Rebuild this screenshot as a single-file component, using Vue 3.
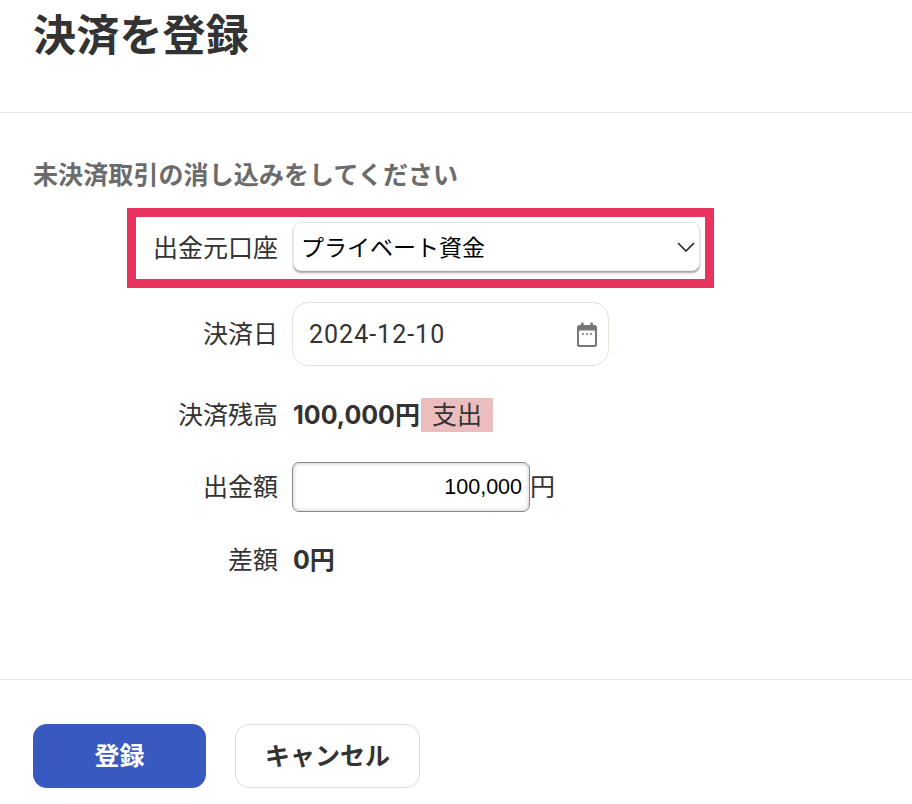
<script setup>
import { ref } from 'vue'

const account = ref('private')
const accounts = [{ id: 'private', name: 'プライベート資金' }]
const payDate = ref('2024-12-10')
const amount = ref('100,000')
</script>

<template>
  <div class="page">
    <header class="page-header">
      <h1>決済を登録</h1>
    </header>

    <main class="page-body">
      <p class="lead">未決済取引の消し込みをしてください</p>

      <div class="form">
        <div class="row row-highlight">
          <label class="row-label">出金元口座</label>
          <div class="select-wrap">
            <select v-model="account" class="select">
              <option v-for="a in accounts" :key="a.id" :value="a.id">{{ a.name }}</option>
            </select>
            <svg class="chevron" width="18" height="10" viewBox="0 0 18 10" fill="none">
              <path d="M1 1l8 8 8-8" stroke="#222" stroke-width="1.6" />
            </svg>
          </div>
        </div>

        <div class="row row-date">
          <label class="row-label">決済日</label>
          <div class="date-wrap">
            <input v-model="payDate" type="text" class="date-input">
            <svg class="calendar" width="22" height="26" viewBox="0 0 22 26">
              <rect x="5" y="0.5" width="2.6" height="5" rx="1" fill="#777" />
              <rect x="14.4" y="0.5" width="2.6" height="5" rx="1" fill="#777" />
              <path d="M3.5 3h15A2.5 2.5 0 0 1 21 5.500v17a2.500 2.500 0 0 1-2.500 2.500h-15A2.500 2.500 0 0 1 1 22.500v-17A2.500 2.500 0 0 1 3.500 3z" fill="#777" />
              <rect x="3" y="8.500" width="16" height="14.500" rx="0.800" fill="#fff" />
              <circle cx="7" cy="12" r="1" fill="#777" />
              <circle cx="11" cy="12" r="1" fill="#777" />
              <circle cx="15" cy="12" r="1" fill="#777" />
            </svg>
          </div>
        </div>

        <div class="row row-balance">
          <label class="row-label">決済残高</label>
          <strong class="value">100,000円</strong>
          <span class="badge">支出</span>
        </div>

        <div class="row row-amount">
          <label class="row-label">出金額</label>
          <input v-model="amount" type="text" class="amount-input">
          <span class="unit">円</span>
        </div>

        <div class="row row-diff">
          <label class="row-label">差額</label>
          <strong class="value">0円</strong>
        </div>
      </div>
    </main>

    <footer class="page-footer">
      <button type="button" class="btn btn-primary">登録</button>
      <button type="button" class="btn btn-cancel">キャンセル</button>
    </footer>
  </div>
</template>

<style scoped>
.page {
  width: 912px;
  height: 804px;
  overflow: hidden;
  background: #fff;
  color: #333;
  font-family: "Noto Sans CJK JP", "Noto Sans", sans-serif;
}
.page-header {
  height: 112px;
  padding-left: 33px;
  border-bottom: 1px solid #e6e6e6;
}
h1 {
  margin: 0;
  font-size: 43px;
  line-height: 64px;
  font-weight: 700;
  letter-spacing: 0.2px;
  color: #333;
}
.page-body {
  height: 567px;
  box-sizing: border-box;
  padding-top: 42px;
  border-bottom: 1px solid #e6e6e6;
}
.lead {
  margin: 0 0 17px 33px;
  font-size: 25px;
  line-height: 36px;
  font-weight: 700;
  letter-spacing: 0.1px;
  color: #6b6b6b;
}
.form {
  display: flex;
  flex-direction: column;
}
.row {
  display: flex;
  align-items: center;
  padding-left: 136px;
}
.row-label {
  width: 142px;
  margin-right: 14px;
  padding-bottom: 4px;
  text-align: right;
  font-size: 25px;
  line-height: 36px;
  color: #333;
  flex-shrink: 0;
}
.row-highlight {
  width: 587px;
  height: 80px;
  box-sizing: border-box;
  margin-left: 127px;
  padding-left: 0;
  border: 9px solid #e9345f;
}
.select-wrap {
  position: relative;
  width: 407px;
  height: 49px;
  margin-left: 1px;
  margin-right: -1px;
  margin-bottom: 3px;
}
.select {
  width: 100%;
  height: 100%;
  box-sizing: border-box;
  padding: 0 40px 2px 7px;
  appearance: none;
  border: 1px solid #e8e8e8;
  border-radius: 8px;
  box-shadow: 0 2px 2px rgba(0, 0, 0, 0.35);
  background: #fff;
  color: #000;
  font-family: inherit;
  font-size: 23px;
}
.chevron {
  position: absolute;
  right: 5px;
  top: 20px;
}
.row-date {
  margin-top: 14px;
}
.date-wrap {
  position: relative;
  width: 317px;
  height: 64px;
}
.date-input {
  width: 100%;
  height: 100%;
  box-sizing: border-box;
  padding: 0 50px 0 16px;
  border: 1px solid #e4e2da;
  border-radius: 16px;
  background: #fff;
  color: #333;
  font-family: Roboto, "Noto Sans", sans-serif;
  font-size: 25px;
  letter-spacing: 1px;
  outline: none;
}
.calendar {
  position: absolute;
  right: 11px;
  top: 20px;
}
.row-balance {
  margin-top: 32px;
  height: 34px;
}
.value {
  margin-left: 1px;
  padding-bottom: 5px;
  font-family: Inter, "Noto Sans CJK JP", sans-serif;
  font-size: 25px;
  font-weight: 700;
  color: #333;
}
.badge {
  height: 34px;
  box-sizing: border-box;
  margin-left: 1px;
  padding: 0 11px 4px;
  background: #ebbdbe;
  color: #333;
  font-size: 25px;
  line-height: 30px;
}
.row-amount {
  margin-top: 30px;
}
.amount-input {
  width: 238px;
  height: 50px;
  box-sizing: border-box;
  padding: 0 7px 0 8px;
  border: 1px solid #8a8a8a;
  border-radius: 7px;
  box-shadow: inset 0 0 4px rgba(0, 0, 0, 0.25);
  background: #fff;
  color: #000;
  text-align: right;
  font-family: "Liberation Sans", sans-serif;
  font-size: 21.5px;
  outline: none;
}
.unit {
  padding-bottom: 4px;
  font-size: 25px;
  color: #333;
}
.row-diff {
  margin-top: 30px;
  height: 36px;
}
.page-footer {
  display: flex;
  gap: 29px;
  padding: 44px 0 0 33px;
}
.btn {
  height: 64px;
  box-sizing: border-box;
  padding: 0 0 4px;
  border-radius: 14px;
  font-family: "Noto Sans CJK JP", sans-serif;
  font-size: 25px;
  font-weight: 700;
  cursor: pointer;
}
.btn-primary {
  width: 173px;
  border: none;
  background: #3759c0;
  color: #fff;
}
.btn-cancel {
  width: 185px;
  border: 1px solid #dcdcdc;
  background: #fff;
  color: #333;
}
</style>

<style>
html, body {
  margin: 0;
  background: #fff;
}
</style>
